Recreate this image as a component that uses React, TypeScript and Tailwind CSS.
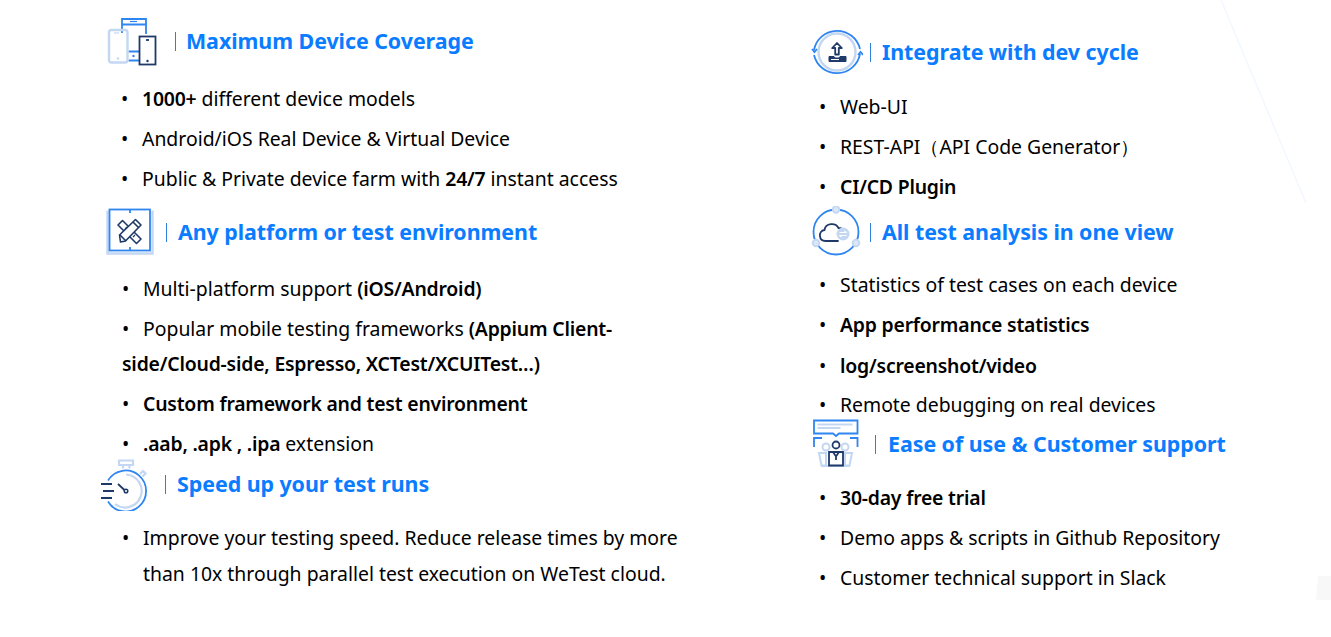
import React from 'react';

const DARK = '#1f3a68';
const BLUE = '#2f86f0';
const LIGHT = '#c3d7f3';

const DevicesIcon = () => (
  <svg width="54" height="52" viewBox="105 12 54 52" fill="none" className="shrink-0">
    <path d="M122 30V16h24v15M122 21.500h24" stroke={BLUE} strokeWidth="1.800" />
    <path d="M130 18.500h7" stroke={BLUE} strokeWidth="1.200" />
    <path d="M128.500 48.500H139M128.500 57.500H139" stroke={BLUE} strokeWidth="1.800" />
    <circle cx="133.500" cy="53" r="1.200" fill={BLUE} />
    <rect x="109" y="27" width="18.500" height="32.500" rx="2.500" stroke={LIGHT} strokeWidth="2.400" />
    <path d="M114 30h5" stroke={LIGHT} strokeWidth="1.200" />
    <circle cx="118" cy="55.500" r="1.200" fill={LIGHT} />
    <rect x="139.500" y="33.500" width="16" height="28" stroke={DARK} strokeWidth="1.800" />
    <path d="M146 37h3" stroke={DARK} strokeWidth="1.800" />
    <circle cx="147.500" cy="58" r="1.200" fill={DARK} />
  </svg>
);

const ToolsIcon = () => (
  <svg width="48" height="48" viewBox="106 205 48 48" fill="none" className="shrink-0">
    <path d="M107.500 207.500V250.500H152.500V207.500" stroke={LIGHT} strokeWidth="2.400" />
    <rect x="109.500" y="206.500" width="40.500" height="41" fill="#ffffff" stroke={BLUE} strokeWidth="1.800" />
    <path d="M130 206.500V210M130 244V247.500" stroke={BLUE} strokeWidth="1.800" />
    <g stroke={DARK} strokeWidth="1.600" strokeLinejoin="round">
      <path d="M122.500 217.500l-4.500 4.500 18.500 18.500 4.500-4.500z" fill="#ffffff" />
      <path d="M125 226l2-2M129 230l2-2M133 234l2-2" strokeWidth="1.200" />
      <path d="M120.500 239l-1-7 16-15.500 5.500 5.500-15.500 16z" fill="#ffffff" />
      <path d="M120 232l6 6M133 219l5.500 5.500" />
    </g>
  </svg>
);

const TimerIcon = () => (
  <svg width="54" height="54" viewBox="100 450 54 54" fill="none" className="shrink-0">
    <path d="M119 453.500h14v4.500h-14zM123 458v3.500M129.500 458v3.500" stroke={LIGHT} strokeWidth="2.200" />
    <path d="M140 467l3-3 2.500 2.500-3 3" stroke={LIGHT} strokeWidth="2.200" />
    <path d="M108 473.500A20.500 20.500 0 1 1 108 494.500" stroke={BLUE} strokeWidth="1.800" />
    <path d="M126 467.500A16.500 16.500 0 1 1 115 497" stroke={LIGHT} strokeWidth="2.200" />
    <path d="M101 477h11M103 484h11M101 491h11" stroke={DARK} strokeWidth="1.800" />
    <path d="M118 477l7 6.500" stroke={DARK} strokeWidth="1.800" />
    <circle cx="126" cy="484" r="1.800" stroke={DARK} strokeWidth="1.500" />
  </svg>
);

const UploadIcon = () => (
  <svg width="52" height="52" viewBox="811 22 52 52" fill="none" className="shrink-0">
    <circle cx="837" cy="48" r="18.500" stroke={LIGHT} strokeWidth="2.400" />
    <path d="M814 46A23.500 23.500 0 0 1 860 45" stroke={BLUE} strokeWidth="1.800" />
    <path d="M860 50A23.500 23.500 0 0 1 814 51" stroke={BLUE} strokeWidth="1.800" />
    <path d="M812 45l2.500 3 2.500-3M858 51l2.500-3 2.500 3" stroke={BLUE} strokeWidth="1.800" />
    <path d="M837 39l-4.800 5h3v6.500h3.600V44h3z" stroke={DARK} strokeWidth="1.800" strokeLinejoin="round" />
    <path d="M829 52.500h5l1 1.500h4l1-1.500h6v5h-17z" fill={DARK} stroke={DARK} strokeWidth="1" />
    <path d="M831 55.500h8" stroke="#ffffff" strokeWidth="1" />
  </svg>
);

const CloudIcon = () => (
  <svg width="52" height="52" viewBox="811 203 52 52" fill="none" className="shrink-0">
    <circle cx="836" cy="229" r="22.500" stroke={BLUE} strokeWidth="1.800" />
    <g fill="#dbe7f8" stroke={LIGHT} strokeWidth="1.800">
      <circle cx="836" cy="206.500" r="3.300" />
      <circle cx="816" cy="240" r="3.300" />
      <circle cx="856" cy="240" r="3.300" />
    </g>
    <path d="M838 238h-12.500c-7 0-7.500-10-1-11 1-7 11-8 14-2 3 0 6 2 6.500 4" stroke={DARK} strokeWidth="1.800" strokeLinecap="round" />
    <circle cx="843" cy="231" r="6.500" fill={LIGHT} />
    <path d="M839.500 229.500h6.500l-1.500-1.500M846.500 232.500H840l1.500 1.500" stroke="#ffffff" strokeWidth="1.100" />
  </svg>
);

const SupportIcon = () => (
  <svg width="48" height="52" viewBox="812 416 48 52" fill="none" className="shrink-0">
    <path d="M814 418.500h43.500v13h-18.500l-3 2.500-3-2.500h-19z" stroke={BLUE} strokeWidth="1.800" />
    <path d="M817.500 422.500h35M817.500 426h23" stroke={LIGHT} strokeWidth="2.200" />
    <path d="M814 445v-9h8M850 436h7.500v9" stroke={BLUE} strokeWidth="1.800" />
    <g stroke={LIGHT} strokeWidth="2">
      <circle cx="826" cy="445" r="3.500" />
      <circle cx="845" cy="445" r="3.500" />
      <path d="M819 451h7v12.500h-4.500zM852 451h-7v12.500h4.500z" />
      <path d="M821 464h29" />
    </g>
    <circle cx="836" cy="443" r="3.500" fill="#ffffff" stroke={DARK} strokeWidth="1.800" />
    <path d="M829 450h14v13.500h-14zM833 450l3 4.500 3-4.500M836 455v3" fill="#ffffff" stroke={DARK} strokeWidth="1.800" />
  </svg>
);

type HeaderProps = {
  icon: React.ReactNode;
  title: string;
  className: string;
  barClassName: string;
};

const SectionHeader = ({ icon, title, className, barClassName }: HeaderProps) => (
  <div className={`flex h-10 items-center ${className}`}>
    <div className="flex h-10 items-center">{icon}</div>
    <span className={`h-[19px] w-px shrink-0 bg-[#2f7fd8] ${barClassName}`} />
    <h2 className="text-[21.4px] font-bold leading-10 tracking-[-0.05px] whitespace-nowrap text-[#0a7cff]">{title}</h2>
  </div>
);

const Item = ({ children, className = '' }: { children: React.ReactNode; className?: string }) => (
  <li className={`flex h-10 items-center whitespace-pre ${className}`}>
    <span className="w-[21px] shrink-0">•</span>
    <span>{children}</span>
  </li>
);

const Strong = ({ children }: { children: React.ReactNode }) => (
  <b className="font-semibold tracking-[-0.2px]">{children}</b>
);

const App = () => {
  return (
    <div className="relative flex h-[637px] w-full overflow-hidden bg-white font-['Noto_Sans',sans-serif] text-[19.4px] text-black">
      <svg className="absolute top-0 left-0" width="1331" height="637" fill="none">
        <path d="M1221 0L1306 203" stroke="#f3f8fe" strokeWidth="1.500" />
        <path d="M1318 576H1331V600H1316z" fill="#f8f8f8" />
      </svg>

      <div className="relative w-[805px] shrink-0 pl-[122px]">
        <SectionHeader
          icon={<DevicesIcon />}
          title="Maximum Device Coverage"
          className="-ml-[17px] mt-[21px]"
          barClassName="ml-[16px] mr-[10px]"
        />
        <ul className="mt-[18px] -ml-px">
          <Item><Strong>1000+</Strong> different device models</Item>
          <Item>Android/iOS Real Device &amp; Virtual Device</Item>
          <Item>Public &amp; Private device farm with <Strong>24/7</Strong> instant access</Item>
        </ul>

        <SectionHeader
          icon={<ToolsIcon />}
          title="Any platform or test environment"
          className="-ml-4 mt-[13px]"
          barClassName="ml-[12px] mr-[11px]"
        />
        <ul className="mt-[17px]">
          <Item>Multi-platform support <Strong>(iOS/Android)</Strong></Item>
          <li className="-mt-px w-[550px] pt-[2.5px] pb-[3.5px] leading-[35px]">
            <span className="inline-block w-[21px]">•</span>
            Popular mobile testing frameworks <Strong>(Appium Client-side/Cloud-side, Espresso, XCTest/XCUITest…)</Strong>
          </li>
          <Item><Strong>Custom framework and test environment</Strong></Item>
          <Item><Strong>.aab, .apk , .ipa</Strong> extension</Item>
        </ul>

        <SectionHeader
          icon={<TimerIcon />}
          title="Speed up your test runs"
          className="-ml-[22px]"
          barClassName="ml-[11px] mr-[11px]"
        />
        <div className="mt-4 flex w-[570px] leading-9">
          <span className="w-[21px] shrink-0">•</span>
          <p>Improve your testing speed. Reduce release times by more than 10x through parallel test execution on WeTest cloud.</p>
        </div>
      </div>

      <div className="relative pl-[14px]">
        <SectionHeader
          icon={<UploadIcon />}
          title="Integrate with dev cycle"
          className="-ml-[8px] mt-[32px]"
          barClassName="ml-[7px] mr-[11px]"
        />
        <ul className="mt-[15px]">
          <Item>Web-UI</Item>
          <Item>REST-API（API Code Generator）</Item>
          <Item><Strong>CI/CD Plugin</Strong></Item>
        </ul>

        <SectionHeader
          icon={<CloudIcon />}
          title="All test analysis in one view"
          className="-ml-[8px] mt-[5px]"
          barClassName="ml-[7px] mr-[11px]"
        />
        <ul className="mt-[13px]">
          <Item>Statistics of test cases on each device</Item>
          <Item><Strong>App performance statistics</Strong></Item>
          <Item className="mt-px"><Strong>log/screenshot/video</Strong></Item>
          <Item className="-mt-px">Remote debugging on real devices</Item>
        </ul>

        <SectionHeader
          icon={<SupportIcon />}
          title="Ease of use &amp; Customer support"
          className="-ml-[7px] -mt-px"
          barClassName="ml-[15px] mr-[12px]"
        />
        <ul className="mt-[14px]">
          <Item><Strong>30-day free trial</Strong></Item>
          <Item>Demo apps &amp; scripts in Github Repository</Item>
          <Item>Customer technical support in Slack</Item>
        </ul>
      </div>
    </div>
  );
};

export default App;
